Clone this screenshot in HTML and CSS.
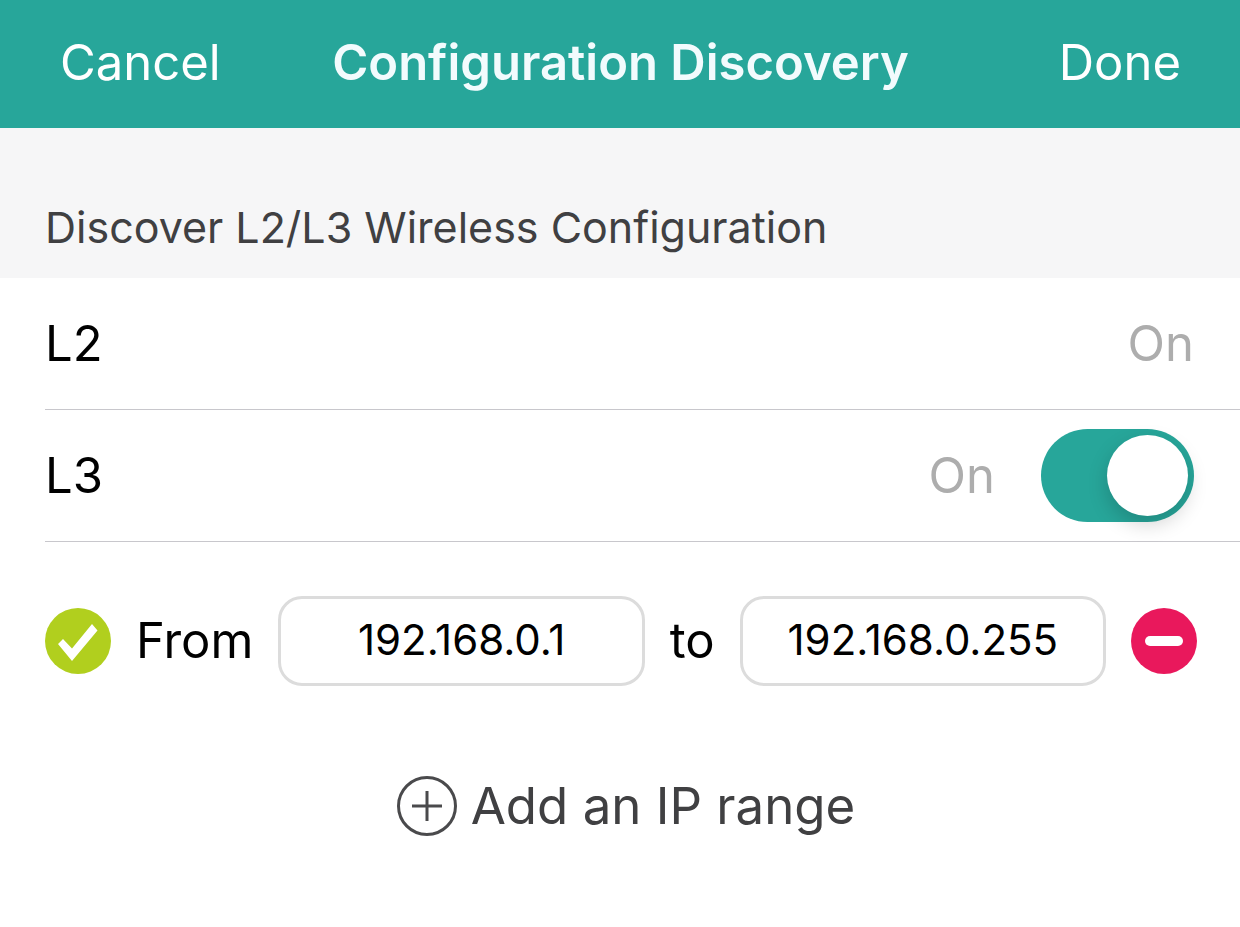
FILE: index.html
```
<!DOCTYPE html>
<html lang="en">
<head>
	<meta charset="utf-8">
	<meta name="viewport" content="width=device-width, initial-scale=1">
	<title>Configuration Discovery</title>
	<link rel="stylesheet" href="styles.css">
</head>
<body>
	<header class="navBar">
		<button type="button" class="btnNav">Cancel</button>
		<h1>Configuration Discovery</h1>
		<button type="button" class="btnNav done">Done</button>
	</header>
	<main>
		<h2 class="sectionTitle">Discover L2/L3 Wireless Configuration</h2>
		<ul class="settingList">
			<li>
				<span class="name">L2</span>
				<span class="state">On</span>
			</li>
			<li>
				<label class="name" for="switchL3">L3</label>
				<span class="state">On</span>
				<input type="checkbox" class="switch" id="switchL3" checked>
			</li>
		</ul>
		<div class="ipRange">
			<svg class="icon" viewBox="0 0 66 66" aria-hidden="true">
				<circle cx="33" cy="33" r="33" fill="#b1cf1e"/>
				<path d="M13 36l5-5 9 9.500L47 16l5.500 6.500L27 53z" fill="#fff"/>
			</svg>
			<label for="ipFrom">From</label>
			<input type="text" class="ip" id="ipFrom" value="192.168.0.1">
			<label for="ipTo">to</label>
			<input type="text" class="ip" id="ipTo" value="192.168.0.255">
			<button type="button" class="btnRemove" aria-label="Remove">
				<svg class="icon" viewBox="0 0 66 66" aria-hidden="true">
					<circle cx="33" cy="33" r="33" fill="#e9185c"/>
					<rect x="14" y="28" width="38" height="10" rx="5" fill="#fff"/>
				</svg>
			</button>
		</div>
		<button type="button" class="btnAdd">
			<svg viewBox="0 0 60 60" aria-hidden="true">
				<circle cx="30" cy="30" r="28.500"/>
				<path d="M15 30h30M30 15v30"/>
			</svg>
			Add an IP range
		</button>
	</main>
</body>
</html>
```
FILE: styles.css
```
* {margin:0; padding:0; box-sizing:border-box;}
body {color:#000; font-family:Inter, "Liberation Sans", sans-serif; font-size:49px; line-height:60px; background:#fff;}
button {color:inherit; font:inherit; border:0; background:none; cursor:pointer;}

/* top bar */
.navBar {display:grid; grid-template-columns:1fr auto 1fr; align-items:center; padding:33px 59px 35px 60px; color:#fff; background:#27a69a;}
.navBar h1 {color:#f2fbfd; font-size:49px; font-weight:600;}
.navBar .btnNav {justify-self:start;}
.navBar .btnNav.done {justify-self:end;}

/* settings */
.sectionTitle {padding:69px 45px 21px; color:#404042; font-size:43px; font-weight:400; background:#f6f6f7;}
.settingList {padding-left:45px; list-style:none;}
.settingList li {display:flex; align-items:center; height:132px; padding-right:46px; border-bottom:1px solid #c8c7cc;}
.settingList .name {flex:1;}
.settingList .state {color:#adadad;}
.switch {flex:none; position:relative; width:153px; height:93px; margin-left:46px; border-radius:47px; background:#cfcfcf; appearance:none; cursor:pointer;}
.switch::before {content:""; position:absolute; top:6px; left:6px; width:81px; height:81px; border-radius:50%; background:#fff; box-shadow:0 8px 20px rgba(0,0,0,.18);}
.switch:checked {background:#27a69a;}
.switch:checked::before {right:6px; left:auto;}

/* ip range */
.ipRange {display:flex; align-items:center; gap:25px; padding:54px 43px 54px 45px;}
.icon {display:block; flex:none; width:66px; height:66px;}
.ip {flex:1; min-width:0; height:90px; padding-bottom:4px; color:#000; font-family:inherit; font-size:42px; text-align:center; border:3px solid #dcdcdc; border-radius:24px; background:#fff;}
.btnRemove {flex:none;}
.btnAdd {display:flex; align-items:center; gap:14px; margin:36px auto; padding-left:12px; color:#404042; font-size:51px;}
.btnAdd svg {width:60px; height:60px; fill:none; stroke:#4a4a4c; stroke-width:3;}
```
